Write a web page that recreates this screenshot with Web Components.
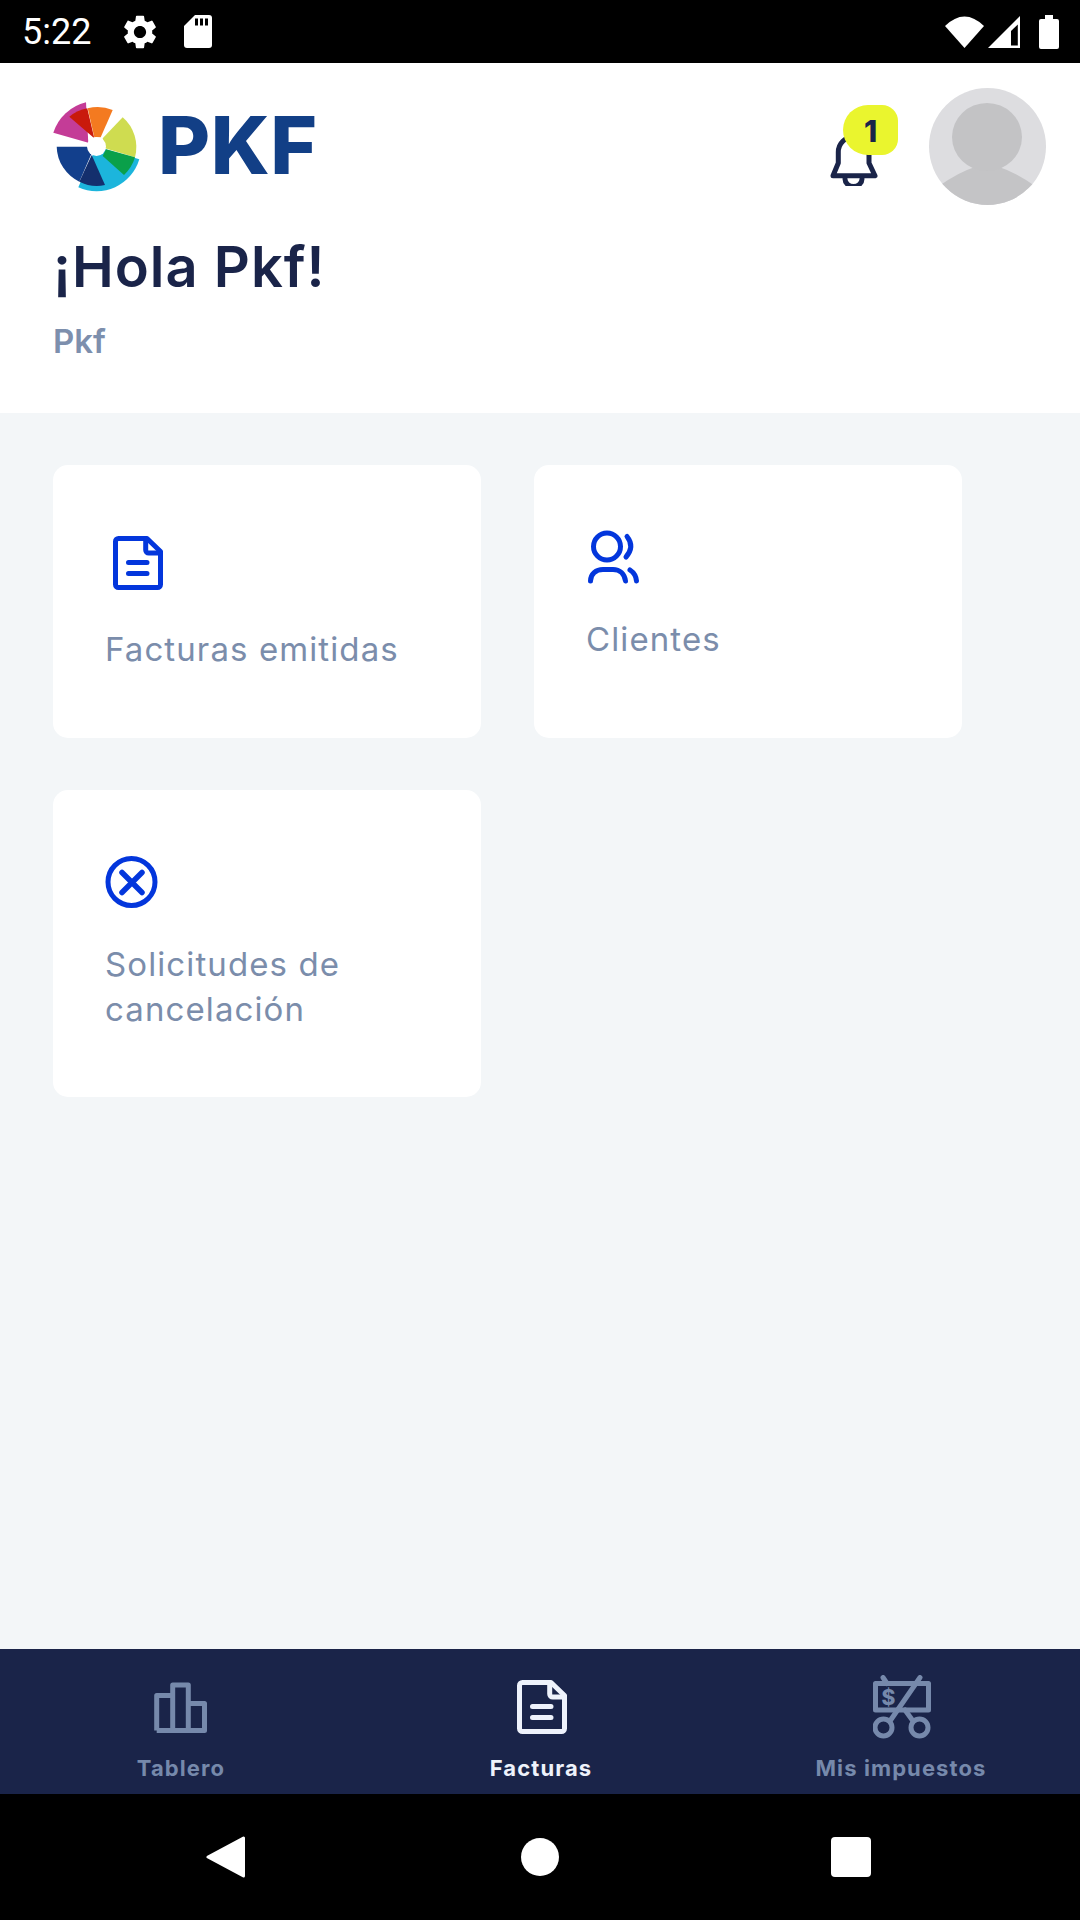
<!DOCTYPE html>
<html lang="es">
<head>
<meta charset="utf-8">
<title>PKF</title>
<style>
  html, body { margin: 0; padding: 0; background: #000; }
</style>
</head>
<body>
<pkf-app>
  <pkf-status-bar slot="status" time="5:22"></pkf-status-bar>
  <pkf-header slot="header" greeting="¡Hola Pkf!" name="Pkf" count="1"></pkf-header>
  <pkf-card>
    <pkf-icon slot="icon" name="file" style="--w:50px;--h:54px;--x:8px;--y:6px;--after:5px;color:#0336dc"></pkf-icon>
    Facturas emitidas
  </pkf-card>
  <pkf-card>
    <pkf-icon slot="icon" name="users" style="--w:53px;--h:54px;--after:1px;color:#0336dc"></pkf-icon>
    Clientes
  </pkf-card>
  <pkf-card>
    <pkf-icon slot="icon" name="cancel" style="--w:53px;--h:52px;--y:1px;--after:2px;color:#0336dc"></pkf-icon>
    Solicitudes de cancelación
  </pkf-card>
  <pkf-tab-bar slot="tabs">
    <pkf-tab label="Tablero" icon="bars"></pkf-tab>
    <pkf-tab label="Facturas" icon="file" shift="3" active></pkf-tab>
    <pkf-tab label="Mis impuestos" icon="tax" shift="3"></pkf-tab>
  </pkf-tab-bar>
  <pkf-nav-bar slot="nav"></pkf-nav-bar>
</pkf-app>

<script>
const ICONS = {
  file: `<svg viewBox="0 0 50 54" width="50" height="54" fill="none" stroke="currentColor" stroke-width="5" stroke-linecap="round" stroke-linejoin="round">
    <path d="M5.500 2.500H34L47.500 15.500V48.500a3 3 0 0 1-3 3H5.500a3 3 0 0 1-3-3V5.500a3 3 0 0 1 3-3z"/>
    <path d="M32.700 3V14a3 3 0 0 0 3 3H47"/>
    <path d="M15.500 26.500H34M15.500 37.500H34"/>
  </svg>`,
  users: `<svg viewBox="0 0 53 54" width="53" height="54" fill="none" stroke="currentColor" stroke-width="5" stroke-linecap="round">
    <circle cx="21" cy="16.500" r="13.500"/>
    <path d="M41 6.500Q49 16.500 40 27"/>
    <path d="M4.500 51C4.500 44 10 39.500 17 39.500H27C34 39.500 38.500 44 39.500 51"/>
    <path d="M44 40Q50 44 50.500 51"/>
  </svg>`,
  cancel: `<svg viewBox="0 0 53 52" width="53" height="52" fill="none" stroke="currentColor" stroke-width="5" stroke-linecap="round">
    <circle cx="26.500" cy="26" r="23.500"/>
    <path d="M17 16.500L37 36.500M37 16.500L17 36.500" stroke-width="5.500"/>
  </svg>`,
  bars: `<svg viewBox="0 0 53 51" width="53" height="51" fill="none" stroke="currentColor" stroke-width="5" stroke-linejoin="round">
    <path d="M2.700 48.500V13.500H18.700M18.700 48.500V3H34.300V48.500M34.300 21.500H50.500V48.500H2.700"/>
  </svg>`,
  tax: `<svg viewBox="0 0 58 64" width="58" height="64" fill="none" stroke="currentColor" stroke-width="5" stroke-linecap="round" stroke-linejoin="round">
    <path d="M2.500 8.500H55.500V35H2.500z"/>
    <path d="M10 2.500L14 8.500M32 35L40 46"/>
    <path d="M47 2.500L17 46"/>
    <circle cx="10.500" cy="52.500" r="8.500"/>
    <circle cx="46.500" cy="52.500" r="8.500"/>
    <text x="16" y="30" text-anchor="middle" fill="currentColor" stroke="none" font-family="Inter, sans-serif" font-weight="800" font-size="21">$</text>
  </svg>`,
};

class PkfIcon extends HTMLElement {
  constructor() {
    super();
    this.shadowDOM = this.attachShadow({mode: 'open'});
  }

  connectedCallback() {
    this.shadowDOM.innerHTML = `
      <style>
        :host {
          display: block;
          width: var(--w, 50px);
          height: var(--h, 54px);
          margin: var(--y, 0) 0 var(--after, 0) var(--x, 0);
        }
        svg { display: block; }
      </style>
      ${ICONS[this.getAttribute('name')]}
    `;
  }
}

class PkfStatusBar extends HTMLElement {
  constructor() {
    super();
    this.shadowDOM = this.attachShadow({mode: 'open'});
  }

  connectedCallback() {
    this.shadowDOM.innerHTML = `
      <style>
        :host {
          display: flex;
          align-items: center;
          height: 63px;
          background: #000;
          color: #fff;
          padding: 0 21px 0 22px;
          box-sizing: border-box;
        }
        .time {
          font: 400 36px/1 Roboto, sans-serif;
          width: 70px;
          white-space: nowrap;
        }
        .gear { margin-left: 32px; display: block; }
        .sd { margin-left: 28px; display: block; }
        .right { margin-left: auto; display: flex; align-items: center; }
        .signal { margin-left: 4px; display: block; }
        .battery { margin-left: 19px; display: block; }
      </style>
      <span class="time">${this.getAttribute('time')}</span>
      <svg class="gear" width="32" height="34" viewBox="2.700 2 18.600 20" fill="#fff">
        <path d="M19.140 12.940c.04-.3.06-.61.06-.94 0-.32-.02-.64-.07-.94l2.030-1.580a.49.49 0 0 0 .12-.61l-1.920-3.320a.488.488 0 0 0-.59-.22l-2.390.96c-.5-.38-1.030-.7-1.620-.94l-.36-2.540a.484.484 0 0 0-.48-.41h-3.840c-.24 0-.43.17-.47.41l-.36 2.540c-.59.24-1.130.57-1.620.94l-2.390-.96c-.22-.08-.47 0-.59.22L2.740 8.870c-.12.21-.08.47.12.61l2.030 1.580c-.05.3-.09.63-.09.94s.02.64.07.94l-2.030 1.580a.49.49 0 0 0-.12.61l1.920 3.320c.12.22.37.29.59.22l2.390-.96c.5.38 1.030.7 1.620.94l.36 2.540c.05.24.24.41.48.41h3.840c.24 0 .44-.17.47-.41l.36-2.540c.59-.24 1.130-.56 1.620-.94l2.390.96c.22.08.47 0 .59-.22l1.920-3.320c.12-.22.07-.47-.12-.61l-2.010-1.580zM12 15.600c-1.980 0-3.600-1.620-3.600-3.600s1.620-3.600 3.600-3.600 3.600 1.620 3.600 3.600-1.620 3.600-3.600 3.600z"/>
      </svg>
      <svg class="sd" width="28" height="33" viewBox="0 0 28 33">
        <path fill="#fff" d="M11 0H25a3 3 0 0 1 3 3V30a3 3 0 0 1-3 3H3a3 3 0 0 1-3-3V11z"/>
        <path fill="#000" d="M11 3.500h3v7h-3zM16 3.500h3v7h-3zM21 3.500h3v7h-3z"/>
      </svg>
      <div class="right">
        <svg width="39" height="32" viewBox="0 0 39 32"><path fill="#fff" d="M19.500 32L0 10Q19.500-9 39 10z"/></svg>
        <svg class="signal" width="32" height="32" viewBox="0 0 32 32">
          <path fill="#fff" d="M0 32L32 0V32z"/>
          <path fill="#000" d="M23 29.500H29.800V8.500L23 15z"/>
        </svg>
        <svg class="battery" width="20" height="34" viewBox="0 0 20 34">
          <path fill="#fff" d="M6 0H14V4H18a2 2 0 0 1 2 2V32a2 2 0 0 1-2 2H2a2 2 0 0 1-2-2V6a2 2 0 0 1 2-2H6z"/>
        </svg>
      </div>
    `;
  }
}

class PkfLogo extends HTMLElement {
  constructor() {
    super();
    this.shadowDOM = this.attachShadow({mode: 'open'});
  }

  connectedCallback() {
    this.shadowDOM.innerHTML = `
      <style>
        :host { display: flex; align-items: center; }
        svg { display: block; flex: none; }
        span {
          margin: -2px 0 0 13px;
          font: 800 80px/1 Inter, "Liberation Sans", sans-serif;
          letter-spacing: 0.500px;
          color: #123f86;
        }
      </style>
      <svg width="92" height="92" viewBox="53 100 92 92">
        <path fill="#1cb5dc" d="M96.500 146.500L139.300 159.300A44.600 44.600 0 0 1 78.300 187.300z"/>
        <path fill="#c43c97" d="M88.300 142.700L53.300 132.700A45.600 45.600 0 0 1 86 102.300z"/>
        <path fill="#c91a0c" d="M94.300 138.300L69.300 116.700A40 40 0 0 1 87.300 108.300z"/>
        <path fill="#f47a20" d="M94.300 137.300L87.700 108.300A40 40 0 0 1 112.700 110L100.700 137.300z"/>
        <path fill="#cfdc50" d="M102.700 138.300L122.700 117.300A39.500 39.500 0 0 1 135 157.300L105 148.300z"/>
        <path fill="#0aa04a" d="M106 149.300L135 157.300A39.500 39.500 0 0 1 124 175L102.700 156z"/>
        <path fill="#123f8c" d="M56.700 146.700H87.300L91.700 153.300L79.300 181.700A40 40 0 0 1 56.700 146.700z"/>
        <path fill="#142f6d" d="M91.700 155L105 185A39.500 39.500 0 0 1 79.300 181.700z"/>
        <circle cx="96.500" cy="146.500" r="9.500" fill="#fff"/>
      </svg>
      <span>PKF</span>
    `;
  }
}

class PkfBell extends HTMLElement {
  constructor() {
    super();
    this.shadowDOM = this.attachShadow({mode: 'open'});
  }

  connectedCallback() {
    this.shadowDOM.innerHTML = `
      <style>
        :host { display: block; position: relative; width: 68px; height: 81px; }
        svg { display: block; }
        .badge {
          position: absolute;
          left: 13px;
          top: 0;
          width: 55px;
          height: 50px;
          border-radius: 25px 16px 16px 25px;
          background: #eaf52e;
          color: #1a2449;
          font: 800 30px/52px Inter, sans-serif;
          text-align: center;
        }
      </style>
      <svg width="48" height="81" viewBox="0 0 48 81" fill="none" stroke="#1a2449" stroke-width="5" stroke-linejoin="round" stroke-linecap="round">
        <path d="M8.300 58V47a15.350 15.350 0 0 1 30.700 0V58L45 70.700H3z"/>
        <path d="M15 74a8.500 7.500 0 0 0 17 0"/>
      </svg>
      <span class="badge">${this.getAttribute('count')}</span>
    `;
  }
}

class PkfHeader extends HTMLElement {
  constructor() {
    super();
    this.shadowDOM = this.attachShadow({mode: 'open'});
  }

  connectedCallback() {
    this.shadowDOM.innerHTML = `
      <style>
        :host {
          display: block;
          height: 350px;
          background: #fff;
          padding: 25px 34px 0 53px;
          box-sizing: border-box;
          font-family: Inter, sans-serif;
        }
        .top { display: flex; align-items: flex-start; }
        pkf-logo { margin-top: 12px; }
        pkf-bell { margin: 17px 31px 0 auto; }
        .avatar { display: block; flex: none; }
        h1 {
          margin: 30px 0 0;
          font-size: 56px;
          letter-spacing: 1px;
          line-height: 64px;
          font-weight: 600;
          color: #1a2449;
        }
        p {
          margin: 22px 0 0;
          font-size: 33px;
          line-height: 40px;
          font-weight: 600;
          color: #7d8fad;
        }
      </style>
      <div class="top">
        <pkf-logo></pkf-logo>
        <pkf-bell count="${this.getAttribute('count')}"></pkf-bell>
        <svg class="avatar" width="117" height="117" viewBox="0 0 117 117">
          <defs><clipPath id="round"><circle cx="58.500" cy="58.500" r="58.500"/></clipPath></defs>
          <g clip-path="url(#round)">
            <rect width="117" height="117" fill="#dddde0"/>
            <path d="M10 98Q30 84 46 79H70Q86 84 106 98V117H10z" fill="#c4c4c6"/>
            <ellipse cx="58" cy="49" rx="35" ry="34" fill="#c3c3c5"/>
          </g>
        </svg>
      </div>
      <h1>${this.getAttribute('greeting')}</h1>
      <p>${this.getAttribute('name')}</p>
    `;
  }
}

class PkfCard extends HTMLElement {
  constructor() {
    super();
    this.shadowDOM = this.attachShadow({mode: 'open'});
  }

  connectedCallback() {
    this.shadowDOM.innerHTML = `
      <style>
        :host {
          display: block;
          background: #fff;
          border-radius: 15px;
          padding: 65px 52px 0;
          box-sizing: border-box;
          font: 400 33px/45px Inter, sans-serif;
          letter-spacing: 1.100px;
          color: #7b8dab;
        }
        .label { padding-top: 32px; }
      </style>
      <slot name="icon"></slot>
      <div class="label"><slot></slot></div>
    `;
  }
}

class PkfTab extends HTMLElement {
  constructor() {
    super();
    this.shadowDOM = this.attachShadow({mode: 'open'});
  }

  connectedCallback() {
    const color = this.hasAttribute('active') ? '#eef2fb' : '#7689ab';
    const shift = this.getAttribute('shift') || 0;
    this.shadowDOM.innerHTML = `
      <style>
        :host {
          display: flex;
          flex-direction: column;
          align-items: center;
          color: ${color};
          font: 700 22px/26px Inter, sans-serif;
          letter-spacing: 1.100px;
        }
        .icon { height: 64px; display: flex; align-items: center; margin-left: ${shift}px; }
        .icon svg { display: block; }
        span { margin: 16px 0 0 2px; }
      </style>
      <div class="icon">${ICONS[this.getAttribute('icon')]}</div>
      <span>${this.getAttribute('label')}</span>
    `;
  }
}

class PkfTabBar extends HTMLElement {
  constructor() {
    super();
    this.shadowDOM = this.attachShadow({mode: 'open'});
  }

  connectedCallback() {
    this.shadowDOM.innerHTML = `
      <style>
        :host {
          display: grid;
          grid-template-columns: repeat(3, 1fr);
          height: 145px;
          background: #1a2449;
          padding-top: 26px;
          box-sizing: border-box;
        }
      </style>
      <slot></slot>
    `;
  }
}

class PkfNavBar extends HTMLElement {
  constructor() {
    super();
    this.shadowDOM = this.attachShadow({mode: 'open'});
  }

  connectedCallback() {
    this.shadowDOM.innerHTML = `
      <style>
        :host {
          display: flex;
          align-items: center;
          height: 126px;
          background: #000;
          padding-left: 206px;
          box-sizing: border-box;
        }
        svg { display: block; }
        .circle { margin-left: 276px; width: 38px; height: 38px; border-radius: 50%; background: #fff; }
        .square { margin-left: 272px; width: 40px; height: 40px; border-radius: 4px; background: #fff; }
      </style>
      <svg width="39" height="42" viewBox="0 0 39 42">
        <path fill="#fff" stroke="#fff" stroke-width="3" stroke-linejoin="round" d="M2 21L37.500 2V40z"/>
      </svg>
      <div class="circle"></div>
      <div class="square"></div>
    `;
  }
}

class PkfApp extends HTMLElement {
  constructor() {
    super();
    this.shadowDOM = this.attachShadow({mode: 'open'});
  }

  connectedCallback() {
    this.shadowDOM.innerHTML = `
      <style>
        :host {
          display: flex;
          flex-direction: column;
          width: 1080px;
          height: 1920px;
          overflow: hidden;
        }
        main {
          flex: 1;
          display: grid;
          grid-template-columns: 428px 428px;
          grid-template-rows: 273px 307px;
          align-content: start;
          gap: 52px 53px;
          padding: 52px 0 0 53px;
          background: #f3f6f8;
        }
      </style>
      <slot name="status"></slot>
      <slot name="header"></slot>
      <main><slot></slot></main>
      <slot name="tabs"></slot>
      <slot name="nav"></slot>
    `;
  }
}

customElements.define('pkf-icon', PkfIcon);
customElements.define('pkf-status-bar', PkfStatusBar);
customElements.define('pkf-logo', PkfLogo);
customElements.define('pkf-bell', PkfBell);
customElements.define('pkf-header', PkfHeader);
customElements.define('pkf-card', PkfCard);
customElements.define('pkf-tab', PkfTab);
customElements.define('pkf-tab-bar', PkfTabBar);
customElements.define('pkf-nav-bar', PkfNavBar);
customElements.define('pkf-app', PkfApp);
</script>
</body>
</html>
